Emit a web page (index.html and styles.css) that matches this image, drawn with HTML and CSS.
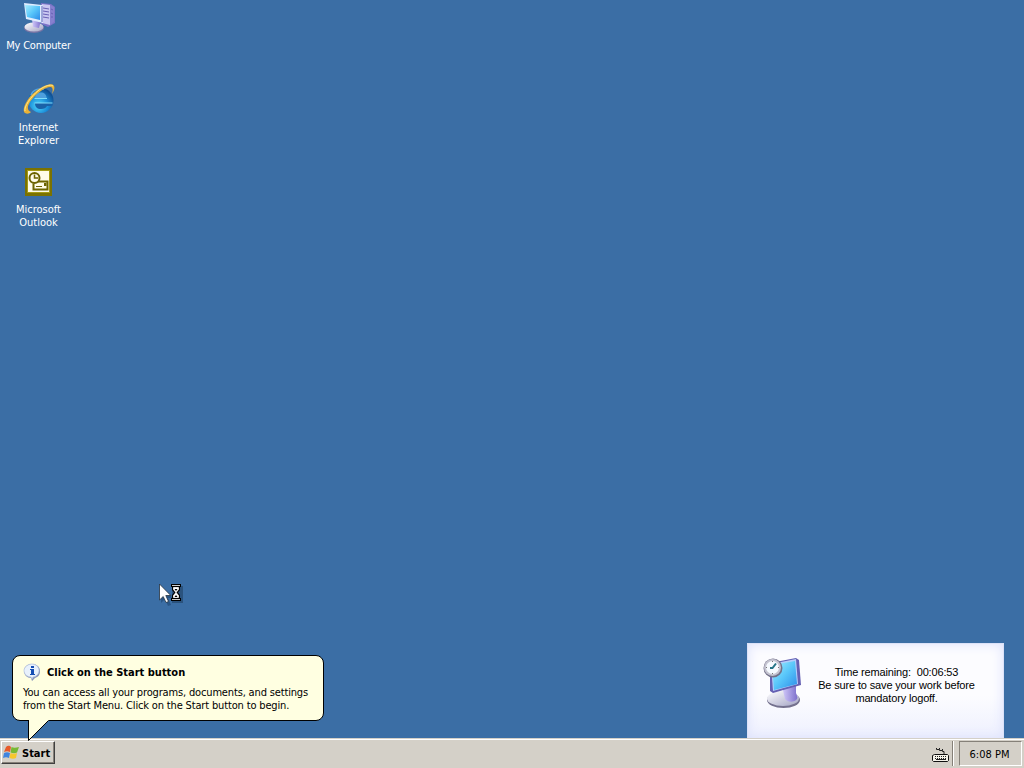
FILE: index.html
```html
<!DOCTYPE html>
<html lang="en">
<head>
    <meta charset="UTF-8">
    <meta name="viewport" content="width=device-width, initial-scale=1.0">
    <title>Desktop</title>
    <link rel="stylesheet" href="styles.css">
</head>
<body>
    <!-- shared gradients -->
    <svg class="defs" width="0" height="0">
        <defs>
            <linearGradient id="screen" x1="0" y1="0" x2="1" y2="1">
                <stop offset="0" stop-color="#a8eeff"/>
                <stop offset=".5" stop-color="#58c6fa"/>
                <stop offset="1" stop-color="#2c8ae8"/>
            </linearGradient>
            <linearGradient id="metal" x1="0" y1="0" x2="1" y2="1">
                <stop offset="0" stop-color="#ffffff"/>
                <stop offset="1" stop-color="#a3a3c4"/>
            </linearGradient>
            <linearGradient id="stand" x1="0" y1="0" x2="1" y2="0">
                <stop offset="0" stop-color="#d4ccfa"/>
                <stop offset="1" stop-color="#7d6fcc"/>
            </linearGradient>
            <radialGradient id="globe" cx=".4" cy=".7" r=".75">
                <stop offset="0" stop-color="#4fd8fc"/>
                <stop offset=".5" stop-color="#1b8dd8"/>
                <stop offset="1" stop-color="#0c3f80"/>
            </radialGradient>
        </defs>
    </svg>

    <main class="desktop">
        <ul class="icon-list">
            <li class="desktop-icon">
                <svg width="34" height="34" viewBox="0 0 34 34">
                    <path d="M19 3l10 1 4 3v16l-7 4-7-3z" fill="#7b72c6"/>
                    <path d="M20 4l8 1v20l-8-2z" fill="#c9c7f1"/>
                    <path d="M28 5l4 2v15l-4 3z" fill="#8680ce"/>
                    <path d="M21 8l6 1M21 11l6 1M21 14l6 1M21 17l6 1M29 9l2 1M29 13l2 1M29 17l2 0" stroke="#6860b4"/>
                    <ellipse cx="12" cy="28" rx="10" ry="5" fill="#7975a5"/>
                    <ellipse cx="12" cy="27" rx="9.500" ry="4.500" fill="url(#metal)"/>
                    <path d="M10 19l9 1-2 8-6-1z" fill="url(#stand)"/>
                    <path d="M2 3l18 2 1 1v17L4 19z" fill="#dfedff"/>
                    <path d="M3 5l15 1v14L5 17z" fill="url(#screen)"/>
                    <path d="M20 6v16" stroke="#5c60b4"/>
                </svg>
                <span class="icon-label my-computer">My Computer</span>
            </li>
            <li class="desktop-icon">
                <svg width="34" height="34" viewBox="0 0 34 34">
                    <circle cx="19" cy="18.500" r="12.500" fill="url(#globe)"/>
                    <path d="M13 16c.5-4 3-5.500 6-5.500s5.500 2 5.500 5.500z" fill="#4e9fdd"/>
                    <path d="M13 21h18l-1 3h-5c-1 2-3 3-6 3-4 0-6-2-6-6z" fill="#1a62a8"/>
                    <path d="M9 13c2-5 7-7 13-6" stroke="#5ba4dc" fill="none" stroke-width="1.500"/>
                    <path d="M12.500 16.500H25M12.500 21h18" stroke="#7fdcfb"/>
                    <path d="M3 31C-1 28 5 16 14 9 22 3 31 0 32 4c1 2 0 5-2 8 1-4 1-6-1-7-4-1-13 5-18 11C5 23 4 28 9 30c-2 2-4 2-6 1z" fill="#e9b236"/>
                    <path d="M3 29C2 25 8 15 17 8 23 4 28 2 31 4" stroke="#ffe78b" fill="none"/>
                </svg>
                <span class="icon-label">Internet<br>Explorer</span>
            </li>
            <li class="desktop-icon outlook">
                <svg width="34" height="34" viewBox="0 0 34 34">
                    <path d="M3 4h27v28H3z" fill="#7b7200"/>
                    <path d="M5.500 6.500h22v22h-22z" fill="#fffce9" stroke="#a49b13"/>
                    <path d="M14.500 17.500h11v8h-14v-6" fill="none" stroke="#6c6400" stroke-width="2"/>
                    <circle cx="12.500" cy="14" r="5" fill="#fffce9" stroke="#6c6400" stroke-width="2"/>
                    <path d="M12.500 10.500V14H16" fill="none" stroke="#6c6400" stroke-width="1.500"/>
                    <path d="M14 22.500h6" stroke="#6c6400"/>
                    <path d="M22 19h2.500v3H22z" fill="#6c6400"/>
                </svg>
                <span class="icon-label">Microsoft<br>Outlook</span>
            </li>
        </ul>

        <svg class="cursor" width="28" height="24" viewBox="0 0 28 24">
            <path d="M3 3v17l4-4 3 7 3-1-3-7h5z" fill="#173c66" opacity=".5"/>
            <path d="M1.500 1v16l3.700-3.500 2.800 6 2.500-1-2.700-6h5z" fill="#fff" stroke="#26323f" stroke-width=".8"/>
            <path d="M14 3h11v17H14z" fill="#17314d" opacity=".45"/>
            <path d="M13 1h10v3h-1v3l-2 2.500 2 2.500v3h1v3H13v-3h1v-3l2-2.500L14 7V4h-1z" fill="#000"/>
            <path d="M14 2.500h8M14 16.500h8M15.500 4.500h5v2L18 9.500l-2.500-3zM15.500 14.500v-2l2.500-3 2.500 3v2z" fill="#fff" stroke="#fff" stroke-width=".8"/>
            <path d="M16.500 6h3L18 8zM18 10v2M16.500 14l1.500-2 1.500 2z" fill="#000"/>
        </svg>

        <section class="balloon">
            <h1 class="balloon-title">
                <svg width="18" height="18" viewBox="0 0 18 18">
                    <path d="M9 1c5 0 8 3 8 7s-2 6-5 7l-3 3-1-3c-4 0-7-3-7-7s3-7 8-7z" fill="#8793b7"/>
                    <path d="M9 1c4 0 7 3 7 6.500S13 14 10 14l-1 2-1-2c-4 0-7-3-7-6.500S5 1 9 1z" fill="#e8f1fc" stroke="#b6c4df" stroke-width=".7"/>
                    <path d="M8 3h3v2H8zM7 6h4v5h1v1H7v-1h1V7H7z" fill="#164fb4"/>
                </svg>
                <span>Click on the Start button</span>
            </h1>
            <p class="balloon-text">
                You can access all your programs, documents, and settings<br>
                from the Start Menu. Click on the Start button to begin.
            </p>
            <svg class="balloon-tail" width="24" height="24" viewBox="0 0 24 24">
                <path d="M1.500 0v21.500L21.500 1.500V0z" fill="#ffffe1"/>
                <path d="M1.500 1v20.500L21.500 1.500" fill="none" stroke="#000"/>
            </svg>
        </section>

        <aside class="session-panel">
            <svg class="session-icon" width="42" height="52" viewBox="0 0 42 52">
                <ellipse cx="21.500" cy="43" rx="16.500" ry="8" fill="#74718e"/>
                <ellipse cx="21" cy="41.500" rx="16" ry="7.500" fill="url(#metal)"/>
                <path d="M20 29l14-1v8c1 3 2 5 1 6-3 4-10 3-12 0z" fill="url(#stand)"/>
                <path d="M8 6l26-5 3 2 2 25-28 8-3-2z" fill="#6560b3"/>
                <path d="M9 7l25-5 2 25-25 7z" fill="#b5cdfa"/>
                <path d="M10 8l23-4 2 23-23 6z" fill="url(#screen)"/>
                <circle cx="11" cy="11" r="9.500" fill="#716f88"/>
                <circle cx="10.500" cy="10.500" r="8.500" fill="#c4c3d0"/>
                <circle cx="10.500" cy="10.500" r="6.500" fill="#f6faff"/>
                <path d="M14 6.500l-3.500 4.500H8" fill="none" stroke="#247487" stroke-width="2"/>
                <path d="M10.500 4v1M10.500 16v1M4 10.500h1M16 10.500h1" stroke="#777"/>
            </svg>
            <p class="session-text">
                Time remaining:&nbsp; 00:06:53<br>
                Be sure to save your work before<br>
                mandatory logoff.
            </p>
        </aside>
    </main>

    <footer class="taskbar">
        <button class="start-button">
            <svg width="17" height="17" viewBox="0 0 17 17">
                <path d="M3 3c2-2 4-1 5 0L7 8C5 7 3 7 1 8z" fill="#e75a29"/>
                <path d="M8.500 3c2 1 4 1 7.500 0l-2 5.500c-2 1-4 1-6.500 0z" fill="#78b933"/>
                <path d="M1 9c2-1 4-1 6 0l-1 5c-2-1-4-1-6 0z" fill="#4085df"/>
                <path d="M7.500 9c2 1 4 1 6.500 0l-1 5c-2 1-4 1-6.500 0z" fill="#f7c72c"/>
            </svg>
            <span class="start-text">Start</span>
        </button>
        <div class="tray">
            <svg class="keyboard" width="18" height="16" viewBox="0 0 18 16">
                <path d="M4.500 0v1.500h3v1h3v1h1.500V6M7.500 0v1.500M10.500 1v1.500" fill="none" stroke="#222"/>
                <path d="M2.500 6.500h13l1 1v5l-1 1h-14l-1-1v-5z" fill="#f4f2e9" stroke="#111"/>
                <path d="M3 8.500h12M3 10.500h12" stroke="#222" stroke-dasharray="1 1"/>
                <path d="M4 11.500h10" stroke="#222"/>
            </svg>
            <div class="tray-divider"></div>
            <div class="clock">6:08 PM</div>
        </div>
    </footer>
</body>
</html>
```
FILE: styles.css
```css
* {
    box-sizing: border-box;
}
body {
    margin: 0;
    height: 768px;
    display: flex;
    flex-direction: column;
    overflow: hidden;
    background-color: #3b6ea5;
    font-family: "DejaVu Sans Condensed", "DejaVu Sans", sans-serif;
    font-stretch: condensed;
    font-size: 11px;
    line-height: 13px;
    color: #000;
}
p, h1, ul {
    margin: 0;
    padding: 0;
}
svg {
    display: block;
    flex-shrink: 0;
}
.defs {
    position: absolute;
}
.desktop {
    position: relative;
    flex: 1;
}

/* Desktop icons */
.icon-list {
    width: 76px;
    list-style: none;
}
.desktop-icon {
    height: 82px;
    display: flex;
    flex-direction: column;
    align-items: center;
    gap: 5px;
    padding-left: 1px;
}
.icon-label {
    color: #fff;
    text-align: center;
    white-space: nowrap;
}
.my-computer {
    letter-spacing: -0.2px;
}
.cursor {
    position: absolute;
    left: 158px;
    top: 583px;
}

/* Start button balloon */
.balloon {
    position: absolute;
    left: 12px;
    top: 655px;
    width: 312px;
    height: 66px;
    padding: 7px 10px;
    background-color: #ffffe1;
    border: 1px solid #000;
    border-radius: 8px;
    z-index: 2;
}
.balloon-title {
    height: 18px;
    display: flex;
    align-items: center;
    gap: 6px;
    font-size: 11px;
    white-space: nowrap;
}
.balloon-text {
    padding-top: 5px;
    letter-spacing: -0.155px;
    white-space: nowrap;
}
.balloon-tail {
    position: absolute;
    left: 14px;
    top: 63px;
}

/* Session timer */
.session-panel {
    position: absolute;
    right: 20px;
    bottom: 0;
    width: 257px;
    height: 95px;
    display: flex;
    padding: 13px 14px 0;
    background: linear-gradient(#fcfcff 55%, #eef0fe);
    border: 1px solid #dbe2f8;
    border-bottom: none;
    box-shadow: inset 0 0 12px #dce1fc;
}
.session-text {
    flex: 1;
    padding: 9px 0 0 0;
    font-family: "Liberation Sans", Arial, sans-serif;
    font-size: 11px;
    letter-spacing: -0.15px;
    text-align: center;
    white-space: nowrap;
}

/* Taskbar */
.taskbar {
    height: 30px;
    display: flex;
    align-items: flex-start;
    justify-content: space-between;
    padding: 1px 2px 0 1px;
    background-color: #d4d0c8;
    border-top: 1px solid #d4d0c8;
    box-shadow: inset 0 1px #fff;
}
.start-button {
    width: 54px;
    height: 23px;
    display: flex;
    align-items: center;
    gap: 2px;
    margin-top: 1px;
    padding: 0 1px;
    background-color: #d4d0c8;
    border: 1px solid;
    border-color: #fff #404040 #404040 #fff;
    box-shadow: inset -1px -1px #858078;
    font: bold 11px/13px "DejaVu Sans Condensed", "DejaVu Sans", sans-serif;
    color: #000;
}
.start-text {
    padding-top: 2px;
}
.tray {
    display: flex;
    align-items: flex-start;
    padding-top: 1px;
}
.keyboard {
    margin-top: 7px;
}
.tray-divider {
    width: 2px;
    height: 25px;
    margin: 0 5px 0 2px;
    border-left: 1px solid #858078;
    border-right: 1px solid #fff;
}
.clock {
    width: 63px;
    height: 25px;
    padding-right: 2px;
    border: 1px solid;
    border-color: #858078 #fff #fff #858078;
    line-height: 25px;
    text-align: center;
}
```
